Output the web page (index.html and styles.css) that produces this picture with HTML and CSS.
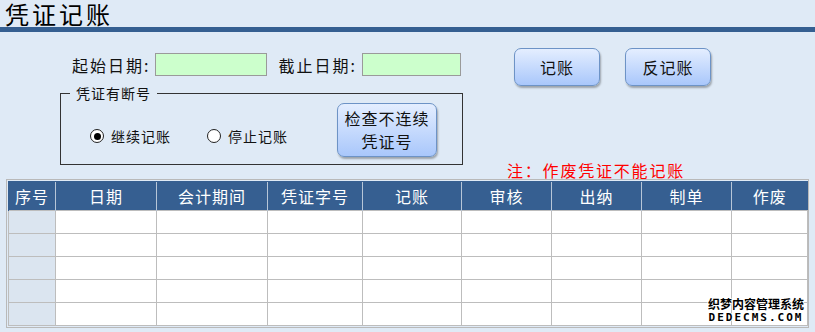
FILE: index.html
```html
<!DOCTYPE html>
<html lang="zh-CN">
<head>
<meta charset="utf-8">
<title>凭证记账</title>
<link rel="stylesheet" href="styles.css">
</head>
<body>
<div class="page-title">凭证记账</div>
<div class="title-bar"></div>

<div class="top">
	<div class="top-left">
		<div class="date-row">
			<span class="date-label">起始日期:</span>
			<span class="date-input"></span>
			<span class="date-label second">截止日期:</span>
			<span class="date-input"></span>
		</div>
		<fieldset class="break-box">
			<legend>凭证有断号</legend>
			<div class="break-body">
				<div class="radio-group">
					<span class="radio checked"></span><span class="radio-text">继续记账</span>
					<span class="radio"></span><span class="radio-text">停止记账</span>
				</div>
				<span class="btn btn-check">检查不连续<br>凭证号</span>
			</div>
		</fieldset>
	</div>
	<div class="top-right">
		<div class="actions">
			<span class="btn">记账</span>
			<span class="btn">反记账</span>
		</div>
		<div class="note">注：作废凭证不能记账</div>
	</div>
</div>

<div class="grid-wrap">
	<table class="grid">
		<colgroup>
			<col style="width:47px"><col style="width:101px"><col style="width:111px">
			<col style="width:95px"><col style="width:99px"><col style="width:90px">
			<col style="width:90px"><col style="width:90px"><col style="width:76px">
		</colgroup>
		<thead>
			<tr><th>序号</th><th>日期</th><th>会计期间</th><th>凭证字号</th><th>记账</th><th>审核</th><th>出纳</th><th>制单</th><th>作废</th></tr>
		</thead>
		<tbody>
			<tr><td class="idx"></td><td></td><td></td><td></td><td></td><td></td><td></td><td></td><td></td></tr>
			<tr><td class="idx"></td><td></td><td></td><td></td><td></td><td></td><td></td><td></td><td></td></tr>
			<tr><td class="idx"></td><td></td><td></td><td></td><td></td><td></td><td></td><td></td><td></td></tr>
			<tr><td class="idx"></td><td></td><td></td><td></td><td></td><td></td><td></td><td></td><td></td></tr>
			<tr><td class="idx"></td><td></td><td></td><td></td><td></td><td></td><td></td><td></td><td></td></tr>
		</tbody>
	</table>
	<div class="watermark">
		<div class="wm-cn">织梦内容管理系统</div>
		<div class="wm-en">DEDECMS.COM</div>
	</div>
</div>
</body>
</html>
```

FILE: styles.css
```css
html, body {
	margin: 0;
	padding: 0;
	width: 100%;
	height: 100%;
	overflow: hidden;
	background: #dfeaf6;
	font-family: "Noto Sans CJK SC", "Liberation Sans", sans-serif;
	color: #111;
}

.page-title {
	line-height: 27px;
	padding-left: 5px;
	font-size: 24px;
	letter-spacing: 3px;
	color: #000;
	white-space: nowrap;
}

.title-bar {
	height: 5px;
	background: #355f91;
}

.top {
	display: flex;
	padding-left: 60px;
}

.top-left {
	width: 403px;
	flex-shrink: 0;
}

.date-row {
	display: flex;
	align-items: center;
	margin-top: 21px;
	padding-left: 12px;
	height: 23px;
	font-size: 16px;
	letter-spacing: 2px;
	white-space: nowrap;
}

.date-label {
	flex-shrink: 0;
	margin-right: 5px;
}

.date-label.second {
	margin-left: 11px;
}

.date-input {
	display: block;
	flex-shrink: 0;
	width: 110px;
	height: 21px;
	background: #ccffcc;
	border: 1px solid #9a9a9a;
}

.date-input:last-child {
	width: 97px;
}

.break-box {
	margin: 7px 0 0 0;
	padding: 0 0 7px 0;
	border: 1px solid #333;
	min-width: 0;
	box-sizing: border-box;
	width: 403px;
}

.break-box legend {
	margin-left: 9px;
	padding: 0 6px;
	font-size: 14px;
	line-height: 20px;
	letter-spacing: 1px;
}

.break-body {
	display: flex;
	align-items: center;
}

.radio-group {
	display: flex;
	align-items: center;
	padding-left: 29px;
	padding-top: 12px;
	font-size: 14px;
	letter-spacing: 1px;
	white-space: nowrap;
}

.radio {
	display: block;
	position: relative;
	width: 12px;
	height: 12px;
	border: 1.5px solid #222;
	border-radius: 50%;
	background: #fff;
	margin-right: 7px;
}

.radio.checked::after {
	content: '';
	position: absolute;
	left: 2.5px;
	top: 2.5px;
	width: 7px;
	height: 7px;
	border-radius: 50%;
	background: #000;
}

.radio-text {
	margin-right: 36px;
}

.btn {
	display: flex;
	align-items: center;
	justify-content: center;
	box-sizing: border-box;
	width: 86px;
	height: 38px;
	border: 1px solid #6d93c6;
	border-radius: 7px;
	background: linear-gradient(#e4eeff, #a9c7fb);
	box-shadow: 1px 2px 2px rgba(0, 0, 0, 0.3);
	font-size: 16px;
	letter-spacing: 1px;
	color: #111;
	white-space: nowrap;
}

.btn-check {
	width: 100px;
	height: 54px;
	margin-left: auto;
	margin-right: 25px;
	text-align: center;
	line-height: 23px;
}

.top-right {
	margin-left: 44px;
}

.actions {
	display: flex;
	gap: 25px;
	margin-top: 16px;
	padding-left: 7px;
}

.note {
	margin-top: 75px;
	font-size: 16px;
	line-height: 18px;
	letter-spacing: 1.8px;
	color: #ff0000;
	white-space: nowrap;
}

.grid-wrap {
	position: relative;
	margin: 0 6px;
	padding: 1px;
	border: 1px solid #b9b9b9;
}

.grid {
	width: 799px;
	border-collapse: collapse;
	table-layout: fixed;
}

.grid th {
	height: 28px;
	padding: 0;
	background: #365f91;
	color: #fff;
	font-weight: normal;
	font-size: 16px;
	letter-spacing: 1px;
	border-left: 1px solid #b7c6d8;
	border-top: 1px solid #365f91;
}

.grid th:first-child {
	border-left: 1px solid #365f91;
}

.grid td {
	height: 22px;
	padding: 0;
	background: #fff;
	border: 1px solid #bdbdbd;
}

.grid td.idx {
	background: #dbe5f0;
}

.watermark {
	position: absolute;
	right: 4px;
	bottom: 3px;
	text-align: center;
	line-height: 13px;
}

.wm-cn {
	font-size: 12px;
	font-weight: bold;
	color: #000;
	text-shadow: 1px 0 #fff, -1px 0 #fff, 0 1px #fff, 0 -1px #fff;
}

.wm-en {
	margin-top: 1px;
	font-family: "DejaVu Sans Mono", monospace;
	font-size: 11px;
	font-weight: bold;
	letter-spacing: 2px;
	color: #000;
	text-shadow: 1px 0 #fff, -1px 0 #fff, 0 1px #fff, 0 -1px #fff;
}
```
